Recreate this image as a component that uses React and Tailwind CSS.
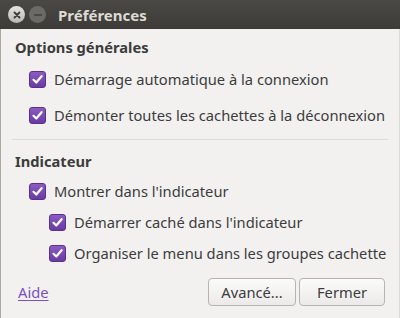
import React, { useState } from 'react';

const Check = ({ checked, onChange }) => (
  <button
    onClick={onChange}
    className="w-[17px] h-[17px] rounded-[3px] bg-gradient-to-b from-[#8a5cc2] to-[#6a3aa3] border border-[#5a2f8f] flex items-center justify-center shrink-0"
  >
    {checked && (
      <svg width="13" height="13" viewBox="0 0 13 13">
        <path d="M2.5 6.8 L5.3 9.5 L10.6 3.2" fill="none" stroke="white" strokeWidth="2.2" strokeLinecap="round" strokeLinejoin="round" />
      </svg>
    )}
  </button>
);

const Row = ({ label, checked, onChange, indent }) => (
  <label className={`h-[20px] flex items-center gap-[8px] ${indent ? 'pl-[48px]' : 'pl-[28px]'}`}>
    <Check checked={checked} onChange={onChange} />
    <span>{label}</span>
  </label>
);

export default function App() {
  const [opts, setOpts] = useState({ a: true, b: true, c: true, d: true, e: true });
  const toggle = (k) => setOpts({ ...opts, [k]: !opts[k] });

  return (
    <div className="w-[400px] h-[318px] bg-[#f2f1f0] text-[#3c3c3c] text-[14.7px] leading-[20px] flex flex-col overflow-hidden" style={{ fontFamily: '"Noto Sans", "DejaVu Sans", sans-serif' }}>
      {/* Title bar */}
      <div className="h-[29px] bg-gradient-to-b from-[#4a4945] to-[#3c3b37] flex items-center pl-[8px] shrink-0">
        <div className="w-[17px] h-[17px] rounded-full bg-gradient-to-b from-[#e6e5e2] to-[#b9b8b4] flex items-center justify-center">
          <svg width="8" height="8" viewBox="0 0 8 8">
            <path d="M1.5 1.5 L6.5 6.5 M6.5 1.5 L1.5 6.5" stroke="#3c3b37" strokeWidth="1.8" strokeLinecap="round" />
          </svg>
        </div>
        <div className="w-[17px] h-[17px] rounded-full bg-[#6b6a66] ml-[4px] flex items-center justify-center">
          <div className="w-[8px] h-[2px] bg-[#4a4945]" />
        </div>
        <div className="ml-[12px] text-[15px] font-bold text-[#dfdbd2]">Préférences</div>
      </div>

      {/* Body */}
      <div className="flex-1 flex flex-col border-l border-[#a8a7a4] border-r border-r-[#dcdbd9]">
        <div className="pl-[14px] pt-[8px] font-bold">Options générales</div>
        <div className="flex flex-col gap-[16px] mt-[12px]">
          <Row label="Démarrage automatique à la connexion" checked={opts.a} onChange={() => toggle('a')} />
          <Row label="Démonter toutes les cachettes à la déconnexion" checked={opts.b} onChange={() => toggle('b')} />
        </div>
        <div className="mx-[11px] mt-[14px] h-px bg-[#dcdbd9]" />
        <div className="pl-[14px] pt-[11px] font-bold">Indicateur</div>
        <div className="flex flex-col gap-[11px] mt-[10px]">
          <Row label="Montrer dans l'indicateur" checked={opts.c} onChange={() => toggle('c')} />
          <Row indent label="Démarrer caché dans l'indicateur" checked={opts.d} onChange={() => toggle('d')} />
          <Row indent label="Organiser le menu dans les groupes cachette" checked={opts.e} onChange={() => toggle('e')} />
        </div>
        <div className="flex items-center mt-[15px] pl-[17px] pr-[14px]">
          <a href="#" className="text-[#7e4fc2] underline underline-offset-2">Aide</a>
          <div className="ml-auto flex gap-[3px]">
            <button className="w-[88px] h-[28px] rounded-[4px] border border-[#b5b4b0] bg-gradient-to-b from-[#fbfbfa] to-[#ebeae8]">Avancé...</button>
            <button className="w-[86px] h-[28px] rounded-[4px] border border-[#b5b4b0] bg-gradient-to-b from-[#fbfbfa] to-[#ebeae8]">Fermer</button>
          </div>
        </div>
      </div>
    </div>
  );
}
